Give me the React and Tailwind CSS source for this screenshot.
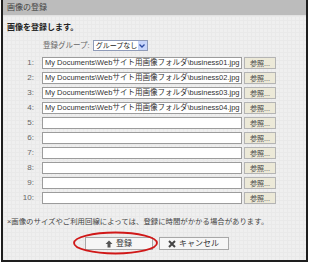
const files = [
  "My Documents\\Webサイト用画像フォルダ\\business01.jpg",
  "My Documents\\Webサイト用画像フォルダ\\business02.jpg",
  "My Documents\\Webサイト用画像フォルダ\\business03.jpg",
  "My Documents\\Webサイト用画像フォルダ\\business04.jpg",
  "",
  "",
  "",
  "",
  "",
  "",
];

function FileRow({ num, value }) {
  return (
    <div className="flex h-[12px] items-center">
      <span className="w-[32px] pr-[1px] text-right text-[8px] leading-none text-[#666]">{num}:</span>
      <div className="ml-[7px] flex h-[12px] w-[200px] items-center overflow-hidden whitespace-nowrap border border-[#9c9c9c] bg-white pl-[2px] text-[7.5px] leading-none text-[#333]">
        {value}
      </div>
      <button className="ml-[2px] flex h-[12px] w-[32px] items-center justify-center border border-[#b4b4b4] bg-[#ece9d8] text-[7px] leading-none text-[#444]">
        参照...
      </button>
    </div>
  );
}

export default function App() {
  return (
    <div className="relative h-[265px] w-[314px] bg-white font-['Liberation_Sans','Noto_Sans_CJK_JP',sans-serif]">
      <div className="ml-[1px] flex h-[262px] w-[307px] flex-col border-x-2 border-b-2 border-[#1e1e1e] bg-[#efefef] bg-[linear-gradient(#e9e9e9_1px,transparent_1px),linear-gradient(90deg,#e9e9e9_1px,transparent_1px)] bg-[size:4px_4px]">
        <div className="flex h-[16px] items-center border-b border-[#e2e2e2] bg-[#bcbcbc] pl-[4px] text-[8px] leading-none text-[#444]">
          画像の登録
        </div>

        <div className="mt-[6px] pl-[4px] text-[8px] font-bold leading-[11px] text-[#222]">画像を登録します。</div>

        <div className="mt-[7px] flex h-[11px] items-center pl-[40px]">
          <span className="whitespace-nowrap text-[7.5px] leading-none text-[#666]">登録グループ:</span>
          <div className="ml-[3px] flex h-[11px] w-[55px] items-center justify-between whitespace-nowrap border border-[#8f9bb8] bg-white pl-[2px] text-[7px] leading-none text-[#222]">
            グループなし
            <span className="flex h-[9px] w-[9px] shrink-0 items-center justify-center bg-[#c8d6fb]">
              <svg width="6" height="4" viewBox="0 0 6 4">
                <path d="M0.5 0.5 L3 3 L5.5 0.5" stroke="#2c4aa0" strokeWidth="1.3" fill="none" />
              </svg>
            </span>
          </div>
        </div>

        <div className="mt-[6px] flex flex-col gap-[3px]">
          {files.map((f, i) => (
            <FileRow key={i} num={i + 1} value={f} />
          ))}
        </div>

        <div className="mt-[13px] whitespace-nowrap pl-[4px] text-[7.4px] leading-[10px] text-[#444]">
          ×画像のサイズやご利用回線によっては、登録に時間がかかる場合があります。
        </div>

        <div className="mt-[10px] flex justify-center gap-[6px] pl-[4px]">
          <button className="flex h-[13px] w-[68px] items-center justify-center gap-[3px] border border-[#a8a8a8] bg-[#f6f6f6] text-[8px] leading-none text-[#333]">
            <svg width="8" height="8" viewBox="0 0 8 8">
              <path d="M4 0.5 L7.5 4 L5.5 4 L5.5 7.5 L2.5 7.5 L2.5 4 L0.5 4 Z" fill="#555" />
            </svg>
            登録
          </button>
          <button className="flex h-[13px] w-[70px] items-center justify-center gap-[3px] border border-[#a8a8a8] bg-[#f6f6f6] text-[8px] leading-none text-[#333]">
            <svg width="8" height="8" viewBox="0 0 8 8">
              <path d="M1 1 L7 7 M7 1 L1 7" stroke="#444" strokeWidth="2" />
            </svg>
            キャンセル
          </button>
        </div>
      </div>

      <svg className="absolute left-[72px] top-[231px]" width="87" height="24" viewBox="0 0 87 24">
        <ellipse cx="43.5" cy="12" rx="41.5" ry="10.5" fill="none" stroke="#d01818" strokeWidth="1.8" />
      </svg>
    </div>
  );
}
